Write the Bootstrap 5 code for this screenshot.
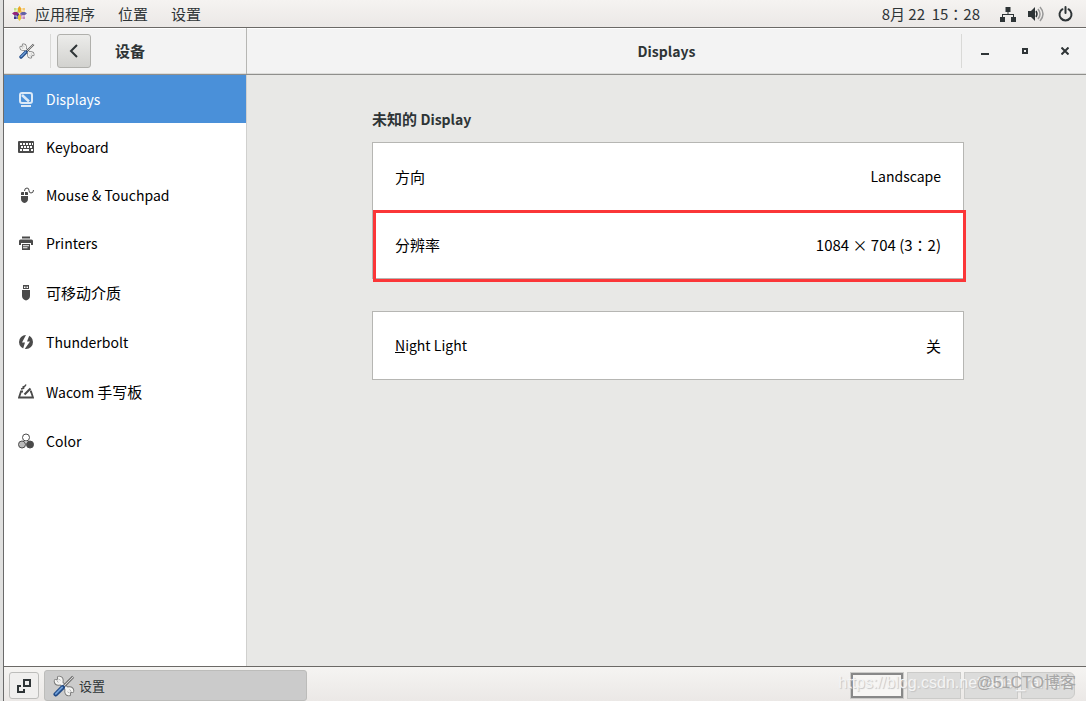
<!DOCTYPE html>
<html lang="zh-CN">
<head>
<meta charset="utf-8">
<meta name="viewport" content="width=device-width, initial-scale=1">
<title>设置</title>
<link href="https://cdn.jsdelivr.net/npm/bootstrap@5.3.0/dist/css/bootstrap.min.css" rel="stylesheet">
<style>
body{font-family:"Noto Sans CJK SC",sans-serif;font-size:15px;line-height:24px;color:#000;background:#e0e0df}
.latin{font-size:14px}
.wide-colon{font-family:"Noto Sans CJK TC",sans-serif}
.desktop{margin-left:3px;border-left:1px solid #6a6a6a;background:#e8e8e6}
.topbar{height:28px;background:linear-gradient(#f5f3f1,#ebe8e6);border-bottom:1px solid #6b6966;color:#2e3436;padding:0 13px 0 8px}
.topbar a{color:#2e3436;text-decoration:none}
.topbar .net{margin:0 12px 0 20px}
.topbar .power{margin-left:14px}
.menus{gap:23px;margin-left:8px}
.headbar{height:47px;background:#f3f3f3;border-bottom:1px solid #8f8f8c;box-shadow:inset 0 1px #fff,inset 0 -1px #dcdcda;color:#2e3436}
.head-left{width:243px;border-right:1px solid #b6b6b3}
.head-right{padding-left:125px}
.app-icon{width:47px;height:34px;border-right:1px solid #d9d9d7;padding-left:15px}
.back{width:34px;height:34px;border:1px solid #b0b0ac;border-radius:3px;background:linear-gradient(#ececea,#d2d2cf);margin-left:6px}
.title{font-size:15px;line-height:24px;font-weight:700;margin:0}
.title.latin{font-size:14px}
.win-btns{height:34px;border-left:1px solid #d9d9d7;padding:0 1px 0 3px}
.win-btns .btn{width:40px;height:34px;display:flex;align-items:center;justify-content:center}
.side{width:243px;background:#fff;border-right:1px solid #d0d0ce}
.side .nav-link{height:48px;padding:0 14px 1px;gap:12px;font-size:14px;color:#000;border-radius:0}
.side .nav-link.tall{height:51px;padding-top:1px}
.side .cjk{font-size:15px}
.side .nav-link.active{background:#4a90d9;color:#fff}
.side svg{color:#4a4a4a;flex:none}
.side .active svg{color:#dbe9f7}
.pane{padding:32px 122px 0 125px}
.group-title{font-size:15px;line-height:24px;font-weight:700;color:#2e3436;margin:0 0 11px}
.panel{background:#fff;border:1px solid #b6b6b3;display:grid;gap:1px}
.panel + .panel{margin-top:32px}
.setting{width:100%;height:67px;border:0;background:none;padding:0 22px;color:#000}
.setting .latin{padding-bottom:2px}
.mark-ring{position:absolute;inset:67px -3px -4px 0;border:3px solid #fb3638;pointer-events:none}
.taskbar{height:35px;background:linear-gradient(#f5f4f2,#ebe8e6);border-top:1px solid #6b6966;padding:3px 11px 0 5px;color:#2e3436}
.restore{width:30px;height:27px;border:1px solid #bdbdbb;border-radius:3px;background:#f0efee;margin:2px 5px 0 0}
.task{width:263px;height:31px;border:1px solid #bcbcba;border-radius:3px;background:#cbcbcb;font-size:13px;padding:0 8px;gap:4px;color:#2e3436}
.spaces{gap:3px;margin-top:2px}
.space{width:54px;height:27px;border:1px solid #cbcbc9;background:#dcdcdb}
.space.current{border:1px solid #cbcbc9;box-shadow:inset 0 0 0 2px #888;background:#f7f6f4}
.stamp{position:absolute;white-space:nowrap;pointer-events:none}
.stamp-url{right:12px;top:4px;font:16px/24px "Liberation Sans",sans-serif;color:#f4f4f4;text-shadow:1px 1px 1px #c4c4c4}
.stamp-site{right:10px;top:4px;font:16px/24px "Liberation Sans","Noto Sans CJK SC",sans-serif;color:#a6a6a6}
</style>
</head>
<body>
<svg class="d-none" xmlns="http://www.w3.org/2000/svg">
<symbol id="tools" viewBox="0 0 24 24">
<g fill="none" stroke-linecap="round"><path d="M6 6l12 12" stroke="#777" stroke-width="5"/><path d="M3 6.500a3.200 3.200 0 1 0 3.500-3.500M21 17.500a3.200 3.200 0 1 0-3.500 3.500" stroke="#777" stroke-width="4.500"/><path d="M6 6l12 12" stroke="#eee" stroke-width="3"/><path d="M3 6.500a3.200 3.200 0 1 0 3.500-3.500M21 17.500a3.200 3.200 0 1 0-3.500 3.500" stroke="#f4f4f2" stroke-width="2.500"/></g>
<path d="M22 2L11 13" stroke="#555" stroke-width="3"/><path d="M22 2L11 13" stroke="#ddd" stroke-width="1.200"/>
<path d="M10.500 13.500L3 21" stroke="#204a87" stroke-width="5" stroke-linecap="round"/><path d="M10 13.500L3 20.500" stroke="#6f9fd8" stroke-width="2" stroke-linecap="round"/>
</symbol>
</svg>
<div class="desktop d-flex flex-column min-vh-100">
<header class="topbar d-flex align-items-center">
<svg width="15" height="15" viewBox="0 0 15 15"><path fill="#c3dc86" d="M2 2h5v5H2z"/><path fill="#f3c872" d="M8 2h5v5H8z"/><path fill="#c48abb" d="M8 8h5v5H8z"/><path fill="#38378a" d="M2 8h5v5H2z"/><path fill="#efa724" d="M7.500 0l1.500 2v3l-1.500 2L6 5V2z"/><path fill="#932279" d="M0 7.500L2 6h3l2 1.500L5 9H2z"/><path fill="#6362a8" d="M15 7.500L13 6h-3L8 7.500 10 9h3z"/><path fill="#e6c832" d="M7.500 15L9 13v-3L7.500 8 6 10v3z"/><path d="M5 1v4H1M10 1v4h4M1 10h4v4M14 10h-4v4" fill="none" stroke="#fff" stroke-width=".7"/></svg>
<nav class="menus d-flex"><a href="#">应用程序</a><a href="#">位置</a><a href="#">设置</a></nav>
<time class="ms-auto wide-colon" lang="zh-TW">8月 22&nbsp; 15：28</time>
<svg class="net" width="16" height="16" viewBox="0 0 16 16" fill="#2e3436"><path d="M5.500 1h5v5h-2v2H14v3h2v5h-5v-5h2V9H3v2h2v5H0v-5h2V8h5.500V6h-2z"/></svg>
<svg width="16" height="16" viewBox="0 0 16 16"><path fill="#2e3436" d="M0 5h3l4-4v14l-4-4H0z"/><g fill="none" stroke-width="1.500"><path stroke="#2e3436" d="M8 5q2 3 0 6"/><path stroke="#999" d="M10 3q4 5 0 10M12 1q6 7 0 14"/></g></svg>
<svg class="power" width="15" height="16" viewBox="0 0 15 16" fill="none" stroke="#2e3436" stroke-width="2"><path d="M4.500 3.200a6 6 0 1 0 6 0M7.500 1v6" stroke-linecap="round"/></svg>
</header>
<div class="headbar d-flex">
<div class="head-left d-flex align-items-center">
<div class="app-icon d-flex align-items-center"><svg width="16" height="16"><use href="#tools"/></svg></div>
<button class="back btn p-0 d-flex align-items-center justify-content-center" aria-label="返回"><svg width="10" height="14" viewBox="0 0 10 14" fill="none" stroke="#2e3436" stroke-width="2"><path d="M8 1L2 7l6 6"/></svg></button>
<h1 class="title ms-4">设备</h1>
</div>
<div class="head-right flex-grow-1 d-flex align-items-center">
<h2 class="title latin flex-grow-1 text-center">Displays</h2>
<div class="win-btns d-flex">
<button class="btn p-0" aria-label="最小化"><svg width="8" height="8"><path d="M0 6h8v2H0z" fill="#2e3436"/></svg></button>
<button class="btn p-0" aria-label="最大化"><svg width="6" height="6"><path d="M1 1h4v4H1z" fill="none" stroke="#2e3436" stroke-width="2"/></svg></button>
<button class="btn p-0" aria-label="关闭"><svg width="8" height="8"><path d="M.5.5l7 7M7.500.5l-7 7" stroke="#2e3436" stroke-width="2"/></svg></button>
</div>
</div>
</div>
<main class="flex-grow-1 d-flex">
<nav class="side nav flex-column flex-nowrap flex-shrink-0">
<a href="#" class="nav-link active d-flex align-items-center"><svg width="16" height="16" viewBox="0 0 16 16" fill="none" stroke="currentColor"><rect x="2" y="2" width="12" height="10" rx="2" stroke-width="2"/><path d="M4 4l7 6.500" stroke-width="2.500"/><path d="M3 15h10" stroke-width="2"/></svg>Displays</a>
<a href="#" class="nav-link d-flex align-items-center"><svg width="16" height="16" viewBox="0 0 16 16"><rect y="2" width="16" height="12" rx="1" fill="currentColor"/><path d="M2 5h13M3 8h12" stroke="#fff" stroke-width="2" stroke-dasharray="2 1"/><path d="M2 11h2m1 0h6m2 0h2" stroke="#fff" stroke-width="2"/></svg>Keyboard</a>
<a href="#" class="nav-link d-flex align-items-center"><svg width="16" height="16" viewBox="0 0 16 16"><path fill="currentColor" d="M3 8V6q0-1 1-1h2v3zM7 5h2q1 0 1 1v2H7zM3 9h7v3q0 3-3.500 4Q3 15 3 12z"/><path fill="none" stroke="currentColor" d="M6.500 4q0-3 2.500-3 2 0 2 2.500T13 6q2.500 0 2.500-3"/></svg>Mouse &amp; Touchpad</a>
<a href="#" class="nav-link d-flex align-items-center"><svg width="16" height="16" viewBox="0 0 16 16" fill="currentColor"><path d="M4 1.500h8v2H4zM1 6q0-1.500 1.500-1.500h11Q15 4.500 15 6v4h-2V8H3v2H1z"/><path fill-rule="evenodd" d="M4 9h8v6H4zm1 1.200h6v1H5zm0 2h4.500v1H5z"/></svg>Printers</a>
<a href="#" class="nav-link tall d-flex align-items-center"><svg width="16" height="16" viewBox="0 0 16 16" fill="currentColor"><path fill-rule="evenodd" d="M5 0h6v4H5zm1 1.500v1.500h1.500V1.500zm2.500 0v1.500H10V1.500z"/><path d="M4 5h8v6q0 3-4 4.500Q4 14 4 11z"/></svg><span class="cjk">可移动介质</span></a>
<a href="#" class="nav-link d-flex align-items-center"><svg width="16" height="16" viewBox="0 0 16 16"><circle cx="8" cy="8" r="7" fill="currentColor"/><path fill="#fff" d="M8.500 0L4 8.500h3L5 15l1 1 6-8.500H9L11.500 1z"/></svg>Thunderbolt</a>
<a href="#" class="nav-link tall d-flex align-items-center"><svg width="16" height="16" viewBox="0 0 16 16" fill="none" stroke="currentColor"><path d="M5 7.500H3L1 13.500h14l-2-6h-1" stroke-width="1.800"/><path d="M6.500 10.500l6-6" stroke-width="2.200"/><path d="M3 5q5-1 1.500-2Q7 3 8 .5" stroke-width="1.300"/></svg><span>Wacom <span class="cjk">手写板</span></span></a>
<a href="#" class="nav-link d-flex align-items-center"><svg width="16" height="16" viewBox="0 0 16 16" stroke="currentColor"><circle cx="8" cy="4.500" r="3.500" fill="#fff"/><circle cx="4" cy="11.500" r="3.500" fill="#bbb"/><circle cx="12" cy="11.500" r="3.500" fill="currentColor"/></svg>Color</a>
</nav>
<section class="pane flex-grow-1">
<h3 class="group-title">未知的 <span class="latin">Display</span></h3>
<div class="panel position-relative">
<button class="setting d-flex align-items-center justify-content-between"><span>方向</span><span class="latin">Landscape</span></button>
<button class="setting d-flex align-items-center justify-content-between"><span>分辨率</span><span class="wide-colon" lang="zh-TW">1084 × 704 (3：2)</span></button>
<span class="mark-ring"></span>
</div>
<div class="panel">
<button class="setting d-flex align-items-center justify-content-between"><span class="latin"><u>N</u>ight Light</span><span>关</span></button>
</div>
</section>
</main>
<footer class="taskbar d-flex align-items-start position-relative">
<button class="restore btn p-0 d-flex align-items-center justify-content-center" aria-label="显示桌面"><svg width="14" height="14" viewBox="0 0 14 14" fill="none" stroke="#2e3436" stroke-width="2"><path d="M7 1h6v6H7zM4 7H1v6h6v-3"/></svg></button>
<button class="task btn d-flex align-items-center"><svg width="22" height="22"><use href="#tools"/></svg>设置</button>
<div class="spaces d-flex ms-auto"><span class="space current"></span><span class="space"></span><span class="space"></span><span class="space rounded-end"></span></div>
<span class="stamp stamp-url">https://blog.csdn.net/abel_ranche</span>
<span class="stamp stamp-site">@51CTO博客</span>
</footer>
</div>
<script src="https://cdn.jsdelivr.net/npm/bootstrap@5.3.0/dist/js/bootstrap.bundle.min.js"></script>
</body>
</html>
